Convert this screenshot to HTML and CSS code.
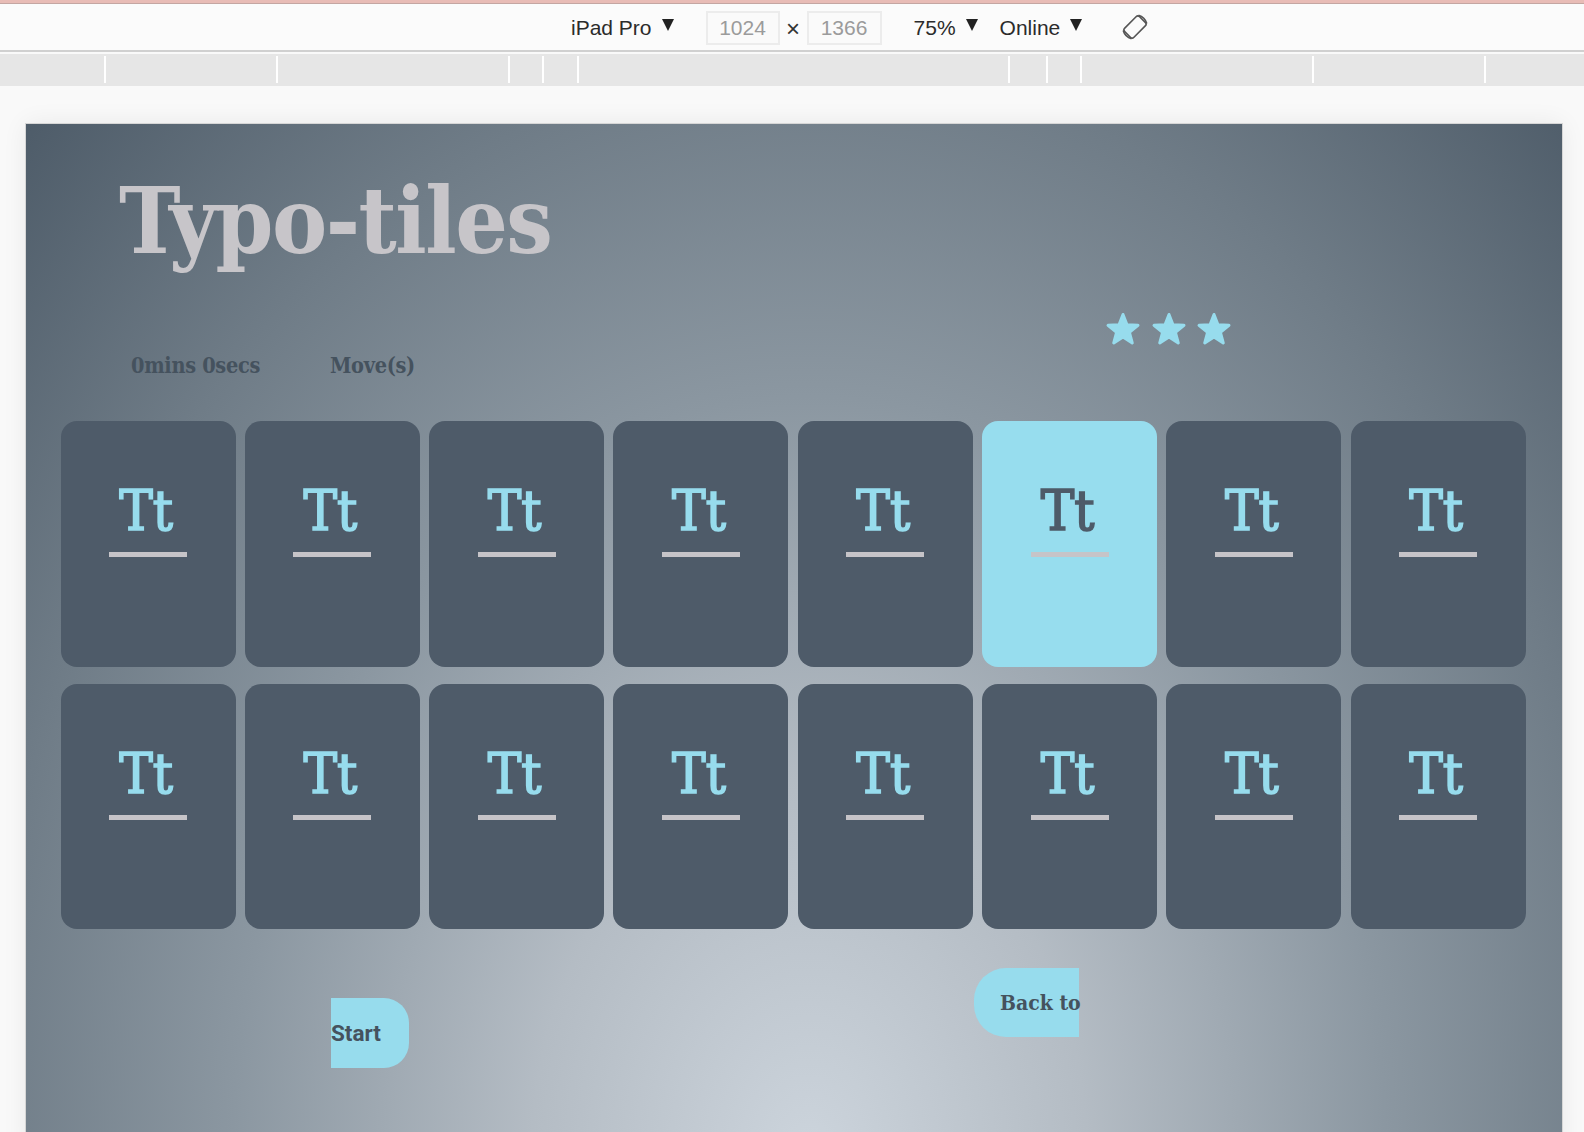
FILE: index.html
```html
<!DOCTYPE html>
<html lang="en">
<head>
<meta charset="utf-8">
<title>Typo-tiles</title>
<link rel="stylesheet" href="styles.css">
</head>
<body>
<div class="topline"></div>
<div class="toolbar">
  <span class="tb-label">iPad Pro</span><span class="tri"></span>
  <span class="tb-box tb-box1">1024</span>
  <span class="tb-x">×</span>
  <span class="tb-box tb-box2">1366</span>
  <span class="tb-label tb-zoom">75%</span><span class="tri"></span>
  <span class="tb-label tb-net">Online</span><span class="tri"></span>
  <svg class="tb-rotate" width="26" height="26" viewBox="0 0 26 26" fill="none" stroke="#555" stroke-width="1.6">
    <rect x="6.5" y="2.5" width="13" height="21" rx="2.5" transform="rotate(45 13 13)"/>
    <path d="M16.5 1.2 A12.3 12.3 0 0 1 24.8 9.5" />
    <path d="M1.2 16.5 A12.3 12.3 0 0 0 9.5 24.8" />
  </svg>
</div>
<div class="ruler"></div>
<main class="frame">
  <h1 class="title">Typo-tiles</h1>
  <div class="info">
    <div class="stats">
      <span class="timer">0mins 0secs</span>
      <span class="moves">Move(s)</span>
    </div>
    <div class="stars">
      <svg class="star" viewBox="0 0 24 24"><path d="M12 2.3 L14.65 9.16 L21.99 9.56 L16.28 14.19 L18.17 21.29 L12 17.3 L5.83 21.29 L7.72 14.19 L2.01 9.56 L9.35 9.16 Z"/></svg>
      <svg class="star" viewBox="0 0 24 24"><path d="M12 2.3 L14.65 9.16 L21.99 9.56 L16.28 14.19 L18.17 21.29 L12 17.3 L5.83 21.29 L7.72 14.19 L2.01 9.56 L9.35 9.16 Z"/></svg>
      <svg class="star" viewBox="0 0 24 24"><path d="M12 2.3 L14.65 9.16 L21.99 9.56 L16.28 14.19 L18.17 21.29 L12 17.3 L5.83 21.29 L7.72 14.19 L2.01 9.56 L9.35 9.16 Z"/></svg>
    </div>
  </div>
  <div class="grid">
    <div class="tile"><span class="tt">Tt</span><span class="bar"></span></div>
    <div class="tile"><span class="tt">Tt</span><span class="bar"></span></div>
    <div class="tile"><span class="tt">Tt</span><span class="bar"></span></div>
    <div class="tile"><span class="tt">Tt</span><span class="bar"></span></div>
    <div class="tile"><span class="tt">Tt</span><span class="bar"></span></div>
    <div class="tile tile-active"><span class="tt">Tt</span><span class="bar"></span></div>
    <div class="tile"><span class="tt">Tt</span><span class="bar"></span></div>
    <div class="tile"><span class="tt">Tt</span><span class="bar"></span></div>
    <div class="tile"><span class="tt">Tt</span><span class="bar"></span></div>
    <div class="tile"><span class="tt">Tt</span><span class="bar"></span></div>
    <div class="tile"><span class="tt">Tt</span><span class="bar"></span></div>
    <div class="tile"><span class="tt">Tt</span><span class="bar"></span></div>
    <div class="tile"><span class="tt">Tt</span><span class="bar"></span></div>
    <div class="tile"><span class="tt">Tt</span><span class="bar"></span></div>
    <div class="tile"><span class="tt">Tt</span><span class="bar"></span></div>
    <div class="tile"><span class="tt">Tt</span><span class="bar"></span></div>
  </div>
  <div class="actions">
    <button class="btn-start">Start</button>
    <button class="btn-back">Back to</button>
  </div>
</main>
</body>
</html>
```
FILE: styles.css
```css
html, body {
  margin: 0;
  padding: 0;
}
body {
  background: #f9f9f9;
  width: 1584px;
  height: 1132px;
  overflow: hidden;
  font-family: "Liberation Sans", Arial, sans-serif;
}
.topline {
  height: 3px;
  background: #e8bcb6;
  border-bottom: 1px solid #c4a6a2;
}
.toolbar {
  height: 46px;
  background: #fbfbfb;
  border-bottom: 2px solid #d0d0d0;
  display: flex;
  align-items: center;
  padding-left: 571px;
  font-size: 21px;
  color: #2b2b2b;
}
.tb-label {
  line-height: 1;
}
.tri {
  width: 0;
  height: 0;
  border-left: 6px solid transparent;
  border-right: 6px solid transparent;
  border-top: 12px solid #222;
  margin-left: 10px;
  margin-top: -4px;
}
.tb-box {
  box-sizing: border-box;
  height: 34px;
  border: 2px solid #ececec;
  background: #fafafa;
  color: #9b9b9b;
  display: flex;
  align-items: center;
  justify-content: center;
  margin-top: 1px;
}
.tb-box1 {
  width: 74px;
  margin-left: 32px;
}
.tb-x {
  width: 27px;
  text-align: center;
  font-size: 24px;
  color: #333;
  margin-top: 4px;
}
.tb-box2 {
  width: 75px;
}
.tb-zoom {
  margin-left: 32px;
}
.tb-net {
  margin-left: 22px;
}
.tb-rotate {
  margin-left: 40px;
  margin-top: 0;
}
.ruler {
  margin-top: 2px;
  height: 32px;
  background-color: #e6e6e6;
  background-image:
    linear-gradient(#fff, #fff), linear-gradient(#fff, #fff), linear-gradient(#fff, #fff),
    linear-gradient(#fff, #fff), linear-gradient(#fff, #fff), linear-gradient(#fff, #fff),
    linear-gradient(#fff, #fff), linear-gradient(#fff, #fff), linear-gradient(#fff, #fff),
    linear-gradient(#fff, #fff);
  background-repeat: no-repeat;
  background-size: 2px 27px;
  background-position:
    104px 2px, 276px 2px, 508px 2px, 542px 2px, 577px 2px,
    1008px 2px, 1046px 2px, 1080px 2px, 1312px 2px, 1484px 2px;
}
.frame {
  display: block;
  margin: 38px 0 0 26px;
  width: 1536px;
  height: 1030px;
  box-shadow: 0 0 0 1px #d6d6d6, 0 0 24px rgba(0, 0, 0, 0.07);
  background: radial-gradient(ellipse farthest-corner at 51% 100%, #ccd4dc 0%, #b4bcc4 25%, #8b97a1 52%, #6f7c87 75%, #4e5c69 100%);
  overflow: hidden;
}
.title {
  margin: 51px 0 0 93px;
  height: 92px;
  font-family: "DejaVu Serif", "Liberation Serif", serif;
  font-stretch: condensed;
  font-weight: 700;
  font-size: 92px;
  line-height: 1;
  color: #c7c5c9;
  letter-spacing: -1.5px;
  white-space: nowrap;
}
.info {
  display: flex;
  align-items: flex-start;
  margin-top: 44px;
  height: 65px;
}
.stats {
  display: flex;
  margin-left: 105px;
  margin-top: 44px;
  font-family: "DejaVu Serif", "Liberation Serif", serif;
  font-stretch: condensed;
  font-weight: 700;
  font-size: 21.5px;
  line-height: 1;
  color: #45525e;
  letter-spacing: -0.3px;
  white-space: nowrap;
}
.moves {
  margin-left: 70px;
}
.stars {
  display: flex;
  gap: 9.5px;
  margin-left: auto;
  margin-right: 330px;
}
.star {
  width: 36px;
  height: 36px;
  display: block;
}
.star path {
  fill: #97dced;
  stroke: #97dced;
  stroke-width: 2;
  stroke-linejoin: round;
}
.grid {
  display: grid;
  grid-template-columns: repeat(8, 175px);
  grid-template-rows: 246px 245px;
  column-gap: 9.3px;
  row-gap: 17px;
  margin: 45px 0 0 34.6px;
}
.tile {
  background: #4e5b69;
  border-radius: 16px;
  display: flex;
  flex-direction: column;
  align-items: center;
  padding-top: 62px;
  box-sizing: border-box;
}
.tt {
  font-family: "DejaVu Serif", "Liberation Serif", serif;
  font-stretch: condensed;
  font-weight: 400;
  font-size: 56px;
  line-height: 1;
  height: 56px;
  color: #97dced;
  margin-left: -4px;
  -webkit-text-stroke: 1.6px #97dced;
}
.bar {
  width: 78px;
  height: 4.5px;
  background: #c6c4c8;
  margin-top: 13px;
}
.tile-active {
  background: #97ddee;
}
.tile-active .tt {
  color: #4e5b69;
  -webkit-text-stroke-color: #4e5b69;
}
.actions {
  display: flex;
  align-items: flex-start;
  margin-top: 38.5px;
}
button {
  border: 0;
  margin: 0;
  background: #97dced;
  color: #45525e;
  font-weight: 700;
  cursor: pointer;
}
.btn-start {
  margin: 30px 0 0 305px;
  width: 78px;
  height: 70px;
  padding: 0;
  border-radius: 0 25px 25px 0;
  font-family: Roboto, "Liberation Sans", sans-serif;
  font-size: 22.5px;
  text-align: left;
}
.btn-back {
  margin-left: 565px;
  width: 105px;
  height: 69px;
  padding: 0 0 0 26px;
  border-radius: 32px 0 0 32px;
  font-family: "DejaVu Serif", "Liberation Serif", serif;
  font-stretch: condensed;
  font-size: 21px;
  text-align: left;
  white-space: nowrap;
}
```
